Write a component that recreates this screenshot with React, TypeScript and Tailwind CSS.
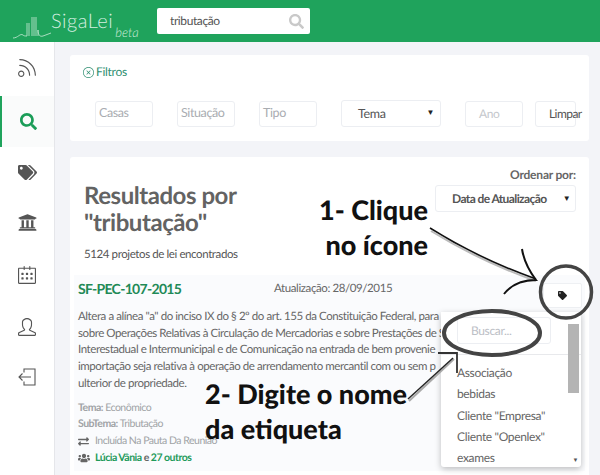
import { FaSearch, FaTags, FaUniversity, FaTag, FaExchangeAlt, FaUsers } from 'react-icons/fa'
import { SlFeed, SlCalender, SlUser, SlClose } from 'react-icons/sl'

const FONT = { fontFamily: 'Lato, "Noto Sans", sans-serif' }
const TAGS = ['Associação', 'bebidas', 'Cliente "Empresa"', 'Cliente "Openlex"', 'exames']

function Field({ label }: { label: string }) {
  return (
    <div className="w-[58px] h-[26px] shrink-0 flex items-center pl-[3px] bg-white border border-[#eceef2] rounded-[3px] text-[12.5px] tracking-[-0.4px] text-[#a9acb1]">
      {label}
    </div>
  )
}

function Logo() {
  return (
    <svg width="38" height="24" viewBox="0 0 38 24" fill="none" stroke="#b9e3cb" strokeWidth="0.9" className="shrink-0">
      <path d="M0 23C5 23 7 18 10 20C11 21 12 21 14 21M14 21V8M16 21V8M19 21V2M21 21V2M23 21V2M25 21V15C25 20 27 22 30 21C33 20 35 19 38 18" />
    </svg>
  )
}

function LogoutIcon() {
  return (
    <svg width="18" height="18" viewBox="0 0 18 18" fill="none" stroke="currentColor" strokeWidth="1.1">
      <path d="M6 4.500V1h11v16H6v-3.500M13 9H1M4.500 5.500L1 9l3.500 3.500" />
    </svg>
  )
}

function NavItem({ children, active = false }: { children: React.ReactNode; active?: boolean }) {
  return (
    <div className={`h-[51px] flex items-center justify-center ${active ? 'bg-[#fafbfb] border-l-2 border-[#1fa35c] text-[#1b9d58]' : 'text-[#555]'}`}>
      {children}
    </div>
  )
}

// annotation marks drawn over the page
function Marks() {
  return (
    <svg width="600" height="475" viewBox="0 0 600 475" fill="none" className="absolute inset-0 pointer-events-none">
      <path d="M431 229 C465 250 505 268 536 279" stroke="#bbb" strokeWidth="2" transform="translate(0 2)" />
      <path d="M430 228 C465 250 505 268 536 279" stroke="#111" strokeWidth="1.6" />
      <path d="M522 249 C524 262 530 272 536 280 C522 280 511 285 504 294" stroke="#111" strokeWidth="2" />
      <ellipse cx="566" cy="292" rx="25.500" ry="26" stroke="#444" strokeWidth="3.500" />
      <ellipse cx="492" cy="333" rx="48" ry="22" stroke="#444" strokeWidth="4" />
      <path d="M408 400 L453 358" stroke="#aaa" strokeWidth="2" transform="translate(1 1)" />
      <path d="M408 399 L453 358" stroke="#222" strokeWidth="1.400" />
      <path d="M438 353 H457 V373" stroke="#333" strokeWidth="1.800" />
    </svg>
  )
}

export default function App() {
  return (
    <div className="relative w-[600px] h-[475px] overflow-hidden bg-[#f3f4f8] flex flex-col [text-rendering:geometricPrecision]" style={FONT}>
      <header className="h-[42px] shrink-0 bg-[#1fa35c] flex items-center pl-[13px]">
        <div className="w-[144px] flex items-end pt-[3px]">
          <Logo />
          <span className="text-[20px] leading-[28px] font-light tracking-[0.5px] text-[#d4efe0] mb-[4px]">SigaLei</span>
          <span className="text-[13px] leading-[14px] italic font-light text-[#cdebd9] ml-[2px]">beta</span>
        </div>
        <div className="w-[153px] h-[26px] bg-white rounded-[2px] flex items-center justify-between pl-[13px] pr-[6px] text-[12px] tracking-[-0.4px] text-[#555]">
          tributação
          <FaSearch className="text-[#c9c9c9] text-[15px]" />
        </div>
      </header>

      <div className="flex-1 flex min-h-0">
        <nav className="w-[55px] shrink-0 bg-white border-r border-[#e5e6ea] pt-[3px]">
          <NavItem><SlFeed className="text-[18px] -translate-y-[3px]" /></NavItem>
          <NavItem active><FaSearch className="text-[17px]" /></NavItem>
          <NavItem><FaTags className="text-[19px]" /></NavItem>
          <NavItem><FaUniversity className="text-[19px] -translate-y-[1px]" /></NavItem>
          <NavItem><SlCalender className="text-[18px]" /></NavItem>
          <NavItem><SlUser className="text-[18px] translate-y-[1px]" /></NavItem>
          <NavItem><LogoutIcon /></NavItem>
        </nav>

        <main className="flex-1 min-w-0 pt-[13px] pl-[15px] pr-[11px]">
          <section className="h-[86px] bg-white rounded-[3px] pt-[10px] pl-[13px]">
            <div className="flex items-center gap-[2px] text-[12px] leading-[14px] tracking-[-0.3px] text-[#2f8f72]">
              <SlClose className="text-[11px]" />
              Filtros
            </div>
            <div className="flex items-center mt-[21px] pl-[12px]">
              <Field label="Casas" />
              <div className="w-[24px]" />
              <Field label="Situação" />
              <div className="w-[24px]" />
              <Field label="Tipo" />
              <div className="w-[24px]" />
              <div className="relative w-[100px] h-[27px] shrink-0 flex items-center pl-[16px] pt-[2px] bg-white border border-[#eceef2] rounded-[3px] text-[12.5px] tracking-[-0.3px] text-[#555]">
                Tema
                <span className="absolute right-[6px] top-[5px] text-[8px] text-[#222]">▼</span>
              </div>
              <div className="w-[24px]" />
              <div className="w-[58px] h-[26px] shrink-0 flex items-center pl-[13px] bg-white border border-[#eceef2] rounded-[3px] text-[12px] tracking-[-0.4px] text-[#c4c7cc]">Ano</div>
              <div className="w-[12px]" />
              <div className="w-[41px] h-[26px] shrink-0 flex items-center pl-[13px] bg-white border border-[#eceef2] rounded-[3px] text-[12px] tracking-[-0.55px] text-[#555] whitespace-nowrap">Limpar</div>
            </div>
          </section>

          <section className="relative h-[340px] mt-[16px] bg-white rounded-[3px] pt-[24px]">
            <div className="flex justify-between pl-[14px] pr-[13px]">
              <div>
                <h1 className="text-[24px] leading-[27px] font-bold tracking-[-0.45px] text-[#636363] mt-[1px]">Resultados por<br />"tributação"</h1>
                <p className="mt-[11px] text-[11.500px] leading-[16px] tracking-[-0.4px] text-[#555]">5124 projetos de lei encontrados</p>
              </div>
              <div className="w-[141px] -mt-[14px] text-right">
                <div className="text-[12px] leading-[16px] font-bold tracking-[-0.2px] text-[#666]">Ordenar por:</div>
                <div className="relative h-[27px] mt-[2px] flex items-center pl-[16px] border border-[#eceef2] rounded-[3px] text-[12px] font-bold tracking-[-0.6px] text-[#555]">
                  Data de Atualização
                  <span className="absolute right-[5px] top-[6px] text-[8px] text-[#222]">▼</span>
                </div>
              </div>
            </div>

            <article className="mt-[12px] mx-[4px] h-[196px] bg-[#fafbfd] pl-[4px] pt-[5px] text-[#666]">
              <div className="flex items-center h-[16px] mt-[1px]">
                <span className="w-[196px] text-[14px] leading-[16px] font-bold tracking-[-0.7px] text-[#1f8a57]">SF-PEC-107-2015</span>
                <span className="text-[11.500px] leading-[16px] tracking-[-0.4px]">Atualização: 28/09/2015</span>
              </div>
              <p className="mt-[12px] text-[11.500px] leading-[16.7px] tracking-[-0.43px] whitespace-nowrap">
                Altera a alínea "a" do inciso IX do § 2º do art. 155 da Constituição Federal, para<br />
                sobre Operações Relativas à Circulação de Mercadorias e sobre Prestações de S<br />
                Interestadual e Intermunicipal e de Comunicação na entrada de bem provenie<br />
                importação seja relativa à operação de arrendamento mercantil com ou sem p<br />
                ulterior de propriedade.
              </p>
              <div className="mt-[7px] text-[10.500px] leading-[16.7px] tracking-[-0.5px] text-[#a0a3a6]">
                <div><b className="font-bold">Tema:</b> Econômico</div>
                <div><b className="font-bold">SubTema:</b> Tributação</div>
                <div className="flex items-center">
                  <FaExchangeAlt className="w-[11px] text-[#666] text-[11px]" />
                  <span className="ml-[6px]">Incluída Na Pauta Da Reunião</span>
                </div>
                <div className="flex items-center font-bold text-[#1f9a5b]">
                  <FaUsers className="text-[#666] text-[12px]" />
                  <span className="ml-[5px]">Lúcia Vânia <span className="text-[#666]">e</span> 27 outros</span>
                </div>
              </div>
            </article>

            {/* tag button and its dropdown lie over the card */}
            <div className="absolute left-[473px] top-[126px] w-[39px] h-[25px] bg-white border border-[#eef0f3] rounded-[2px] flex items-center justify-center">
              <FaTag className="text-[9px] text-[#222]" />
            </div>
            <div className="absolute left-[371px] top-[155px] w-[140px] h-[155px] bg-white rounded-b-[3px] shadow-[0_2px_6px_rgba(0,0,0,0.25)] text-[12px] tracking-[-0.35px] text-[#666]">
              <div className="h-[43px] border-b border-[#e8e9ec] pl-[16px] pt-[5px]">
                <div className="w-[94px] h-[27px] border border-[#eceef2] rounded-[3px] flex items-center pl-[13px] text-[#bcc0c6]">Buscar...</div>
              </div>
              <ul className="pl-[16px] pt-[7px]">
                {TAGS.map(t => (
                  <li key={t} className="h-[21.3px] leading-[21px]">{t}</li>
                ))}
              </ul>
              <div className="absolute right-[2px] top-[12px] w-[11px] h-[69px] bg-[#b4b4b4]" />
              <span className="absolute right-[3px] bottom-[2px] text-[6px] text-[#555]">▼</span>
            </div>
          </section>
        </main>
      </div>

      <Marks />

      <div className="absolute left-[306px] top-[192px] w-[122px] text-right text-[27px] leading-[35px] font-black text-[#111]">
        1- Clique<br />no ícone
      </div>
      <div className="absolute left-[205px] top-[376px] text-[27px] leading-[35px] font-black text-[#111]">
        2- Digite o nome<br />da etiqueta
      </div>
    </div>
  )
}
